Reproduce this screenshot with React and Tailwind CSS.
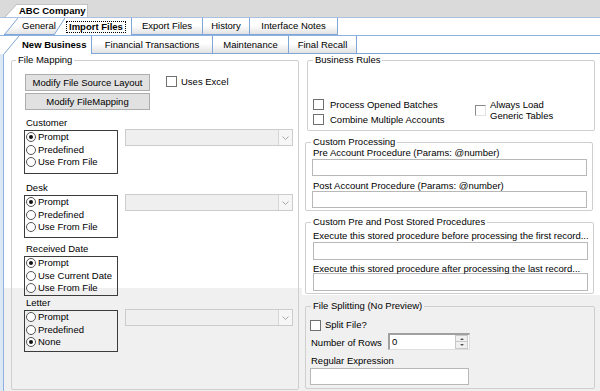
import React from 'react';

// small drawn pieces (tab slant, chevrons)
const Slant = ({ w, h, selected, id, stroke = '#7ea6d8' }) => (
  <svg width={w} height={h} viewBox={`0 0 ${w} ${h}`} className="block shrink-0">
    <defs>
      <linearGradient id={id} x1="0" y1="0" x2="0" y2="1">
        <stop offset="0" stopColor="#ffffff" />
        <stop offset="0.45" stopColor="#ffffff" />
        <stop offset="1" stopColor="#e2e2e2" />
      </linearGradient>
    </defs>
    <polygon points={`0,${h} ${w},0 ${w},${h}`} fill={selected ? '#ffffff' : `url(#${id})`} />
    <line x1="0" y1={h} x2={w} y2="0" stroke={stroke} strokeWidth="1" />
    {!selected && <line x1="0" y1={h - 0.5} x2={w} y2={h - 0.5} stroke={stroke} strokeWidth="1" />}
  </svg>
);

const Chevron = () => (
  <svg width="7" height="4" viewBox="0 0 7 4" className="block">
    <path d="M0.5 0.5 L3.5 3.5 L6.5 0.5" fill="none" stroke="#a8a8a8" strokeWidth="1" />
  </svg>
);

const CheckBox = ({ sunken }) => (
  <div
    className={
      sunken
        ? 'w-[11px] h-[11px] shrink-0 bg-white border border-t-[#8a8a8a] border-l-[#8a8a8a] border-b-[#e2e2e2] border-r-[#e2e2e2]'
        : 'w-[11px] h-[11px] shrink-0 bg-white border border-[#707070]'
    }
  />
);

const Radio = ({ on }) => (
  <div className="w-[10px] h-[10px] shrink-0 rounded-full border border-[#555555] bg-white flex items-center justify-center">
    {on && <div className="w-[4px] h-[4px] rounded-full bg-[#111111]" />}
  </div>
);

const Combo = () => (
  <div className="ml-[7px] -mt-[1px] w-[168px] h-[17px] border border-[#cccccc] bg-[#efefef] flex justify-end">
    <div className="w-[14px] h-full border-l border-[#d6d6d6] bg-[#f6f6f6] flex items-center justify-center">
      <Chevron />
    </div>
  </div>
);

const RadioGroup = ({ label, options, selected, boxClass, wrapClass, combo }) => (
  <div className={wrapClass}>
    <div className="ml-[2px] h-[12px] leading-[12px]">{label}</div>
    <div className="flex mt-[1px] items-start">
      <div className={boxClass}>
        {options.map(o => (
          <div key={o} className="flex items-center h-[12.5px]">
            <div className="ml-[1px]"><Radio on={o === selected} /></div>
            <span className="ml-[2px] leading-[12px]">{o}</span>
          </div>
        ))}
      </div>
      {combo && <Combo />}
    </div>
  </div>
);

const TextBox = ({ className }) => (
  <div className={`${className} h-[17px] border border-[#b8b8b8] bg-white`} />
);

const App = () => {
  return (
    <div className="w-[600px] h-[391px] overflow-hidden bg-white text-[9.5px] leading-[12px] text-black font-['Liberation_Sans',Arial,sans-serif]">
      {/* window caption tab */}
      <div className="h-[17px] bg-[#dadada] flex items-end pl-[5px]">
        <Slant w={12} h={13} selected id="abc" stroke="#bcbcbc" />
        <div className="w-[71px] h-[13px] bg-white border-t border-r border-[#c4c4c4] pl-[2px] font-bold leading-[12px]">
          ABC Company
        </div>
      </div>

      {/* outer tabs */}
      <div className="flex h-[18px] border-t border-[#a9c1df] bg-white">
        <div className="w-[4px] shrink-0" />
        <div className="flex h-full">
          <Slant w={14} h={17} id="gen" />
          <div className="w-[44px] h-full pl-[4px] leading-[16px] border-b border-[#7ea6d8] bg-linear-to-b from-white from-45% to-[#e2e2e2]">
            General
          </div>
        </div>
        <div className="flex h-full -ml-[8px] relative z-10">
          <Slant w={11} h={17} selected id="imp" />
          <div className="w-[67px] h-full bg-white border-r border-[#7ea6d8] pt-[3px] pl-[1px]">
            <span className="inline-block border border-dotted border-black px-[2px] leading-[10px] font-bold">Import Files</span>
          </div>
        </div>
        <div className="w-[71px] h-full text-center leading-[16px] border-r border-b border-[#7ea6d8] bg-linear-to-b from-white from-45% to-[#e2e2e2]">
          Export Files
        </div>
        <div className="w-[47px] h-full text-center leading-[16px] border-r border-b border-[#7ea6d8] bg-linear-to-b from-white from-45% to-[#e2e2e2] rounded-tl-[3px]">
          History
        </div>
        <div className="w-[88px] h-full text-center leading-[16px] border-r border-b border-[#7ea6d8] bg-linear-to-b from-white from-45% to-[#e2e2e2] rounded-tl-[3px]">
          Interface Notes
        </div>
        <div className="flex-1" />
      </div>

      {/* inner tabs */}
      <div className="flex h-[19px] border-t border-[#8db2e0] bg-white">
        <div className="w-[4px] shrink-0" />
        <div className="flex h-full relative z-10">
          <Slant w={15} h={18} selected id="nb" />
          <div className="w-[73px] h-full bg-white border-r border-[#7ea6d8] pl-[3px] leading-[17px] font-bold">
            New Business
          </div>
        </div>
        <div className="w-[121px] h-full text-center leading-[17px] border-r border-b border-[#7ea6d8] bg-linear-to-b from-white from-45% to-[#e2e2e2]">
          Financial Transactions
        </div>
        <div className="w-[76px] h-full text-center leading-[17px] border-r border-b border-[#7ea6d8] bg-linear-to-b from-white from-45% to-[#e2e2e2] rounded-tl-[3px]">
          Maintenance
        </div>
        <div className="w-[68px] h-full text-center leading-[17px] border-r border-b border-[#7ea6d8] bg-linear-to-b from-white from-45% to-[#e2e2e2] rounded-tl-[3px]">
          Final Recall
        </div>
        <div className="flex-1 border-b border-[#7ea6d8]" />
      </div>

      {/* tab page */}
      <div className="flex h-[337px]">
        <div className="w-[3px] shrink-0 bg-[#dde8f5]" />
        <div className="flex flex-1 border-l border-[#8db2e0]">
          {/* left column */}
          <div className="w-[298px] shrink-0 pl-[7px] bg-[linear-gradient(to_bottom,#ffffff_234px,#f0f0f0_234px)]">
            <fieldset className="w-[288px] border border-[#cfcfcf] rounded-[2px] pb-[37px]">
              <legend className="ml-[4px] px-[2px] leading-[12px]">File Mapping</legend>
              <div className="flex mt-[8px] ml-[13px]">
                <div className="flex flex-col gap-[2px]">
                  <div className="w-[125px] h-[17px] bg-[#e1e1e1] border border-[#adadad] text-center leading-[15px]">Modify File Source Layout</div>
                  <div className="w-[125px] h-[17px] bg-[#e1e1e1] border border-[#adadad] text-center leading-[15px]">Modify FileMapping</div>
                </div>
                <div className="ml-[16px] mt-[2px] h-[11px] flex items-center">
                  <CheckBox />
                  <span className="ml-[4px]">Uses Excel</span>
                </div>
              </div>
              <div className="ml-[12px]">
                <RadioGroup
                  wrapClass="mt-[7px]"
                  label="Customer"
                  options={['Prompt', 'Predefined', 'Use From File']}
                  selected="Prompt"
                  boxClass="w-[94px] h-[44px] border border-[#3c3c3c]"
                  combo
                />
                <RadioGroup
                  wrapClass="mt-[8px]"
                  label="Desk"
                  options={['Prompt', 'Predefined', 'Use From File']}
                  selected="Prompt"
                  boxClass="w-[94px] h-[43px] border border-[#3c3c3c]"
                  combo
                />
                <RadioGroup
                  wrapClass="mt-[5px]"
                  label="Received Date"
                  options={['Prompt', 'Use Current Date', 'Use From File']}
                  selected="Prompt"
                  boxClass="w-[94px] h-[40px] border border-[#3c3c3c]"
                />
                <RadioGroup
                  wrapClass="mt-[1px]"
                  label="Letter"
                  options={['Prompt', 'Predefined', 'None']}
                  selected="None"
                  boxClass="w-[94px] h-[42px] border border-[#3c3c3c]"
                  combo
                />
              </div>
            </fieldset>
          </div>

          {/* right column */}
          <div className="flex-1 pl-[3px] bg-[linear-gradient(to_bottom,#ffffff_241px,#f0f0f0_241px)]">
            <fieldset className="ml-[2px] w-[288px] border border-[#cfcfcf] rounded-[2px] pb-[3px]">
              <legend className="ml-[5px] px-[2px] leading-[12px]">Business Rules</legend>
              <div className="flex mt-[31px] ml-[5px]">
                <div className="w-[162px] shrink-0">
                  <div className="flex items-center h-[15px]">
                    <CheckBox />
                    <span className="ml-[6px]">Process Opened Batches</span>
                  </div>
                  <div className="flex items-center h-[15px]">
                    <CheckBox />
                    <span className="ml-[6px]">Combine Multiple Accounts</span>
                  </div>
                </div>
                <div className="flex items-center mt-[2px] h-[22px]">
                  <CheckBox sunken />
                  <div className="ml-[4px] leading-[11px]">
                    <div>Always Load</div>
                    <div>Generic Tables</div>
                  </div>
                </div>
              </div>
            </fieldset>

            <fieldset className="mt-[5px] w-[288px] border border-[#cfcfcf] rounded-[2px] pb-[2px]">
              <legend className="ml-[5px] px-[2px] leading-[12px]">Custom Processing</legend>
              <div className="-mt-[1px] ml-[7px] h-[12px]">Pre Account Procedure (Params: @number)</div>
              <TextBox className="ml-[6px] w-[275px]" />
              <div className="mt-[4px] ml-[7px] h-[12px]">Post Account Procedure (Params: @number)</div>
              <TextBox className="-mt-[1px] ml-[6px] w-[275px]" />
            </fieldset>

            <fieldset className="mt-[5px] w-[289px] border border-[#cfcfcf] rounded-[2px] pb-[2px]">
              <legend className="ml-[5px] px-[2px] leading-[12px]">Custom Pre and Post Stored Procedures</legend>
              <div className="mt-[2px] ml-[7px] h-[12px] whitespace-nowrap">Execute this stored procedure before processing the first record...</div>
              <div className="ml-[7px] w-[275px] h-[18px] border border-[#b8b8b8] bg-white" />
              <div className="mt-[3px] ml-[7px] h-[12px] whitespace-nowrap">Execute this stored procedure after processing the last record...</div>
              <div className="-mt-[2px] ml-[7px] w-[275px] h-[18px] border border-[#b8b8b8] bg-white" />
            </fieldset>

            <fieldset className="mt-[6px] w-[290px] border border-[#cfcfcf] rounded-[2px] pb-[3px]">
              <legend className="ml-[5px] px-[2px] leading-[12px]">File Splitting (No Preview)</legend>
              <div className="mt-[7px] ml-[4px] flex items-center h-[12px]">
                <CheckBox />
                <span className="ml-[4px]">Split File?</span>
              </div>
              <div className="mt-[2px] ml-[5px] flex items-center">
                <div className="w-[77px] pt-[2px]">Number of Rows</div>
                <div className="w-[82px] h-[17px] flex bg-white border-t-2 border-l-2 border-t-[#a0a0a0] border-l-[#a0a0a0] border-b border-r border-b-[#dedede] border-r-[#dedede]">
                  <div className="flex-1 pl-[2px] leading-[13px]">0</div>
                  <div className="w-[13px] mr-[1px] flex flex-col">
                    <div className="h-[7px] bg-[#f0f0f0] border border-[#c8c8c8] flex items-center justify-center">
                      <div className="w-0 h-0 border-l-[2px] border-r-[2px] border-b-[2px] border-l-transparent border-r-transparent border-b-[#555555]" />
                    </div>
                    <div className="h-[7px] bg-[#f0f0f0] border border-t-0 border-[#c8c8c8] flex items-center justify-center">
                      <div className="w-0 h-0 border-l-[2px] border-r-[2px] border-t-[2px] border-l-transparent border-r-transparent border-t-[#555555]" />
                    </div>
                  </div>
                </div>
              </div>
              <div className="mt-[5px] ml-[5px] h-[12px]">Regular Expression</div>
              <TextBox className="mt-[1px] ml-[4px] w-[159px]" />
            </fieldset>
          </div>
        </div>
      </div>
    </div>
  );
};

export default App;
